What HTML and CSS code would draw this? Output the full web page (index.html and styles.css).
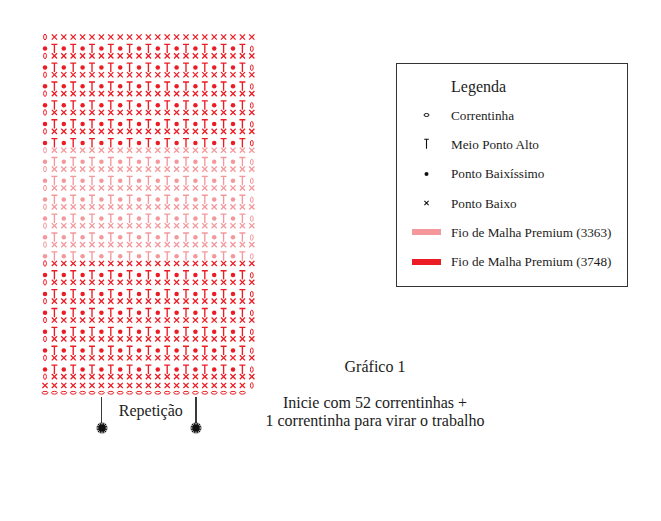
FILE: index.html
```
<!DOCTYPE html>
<html lang="pt">
<head>
<meta charset="utf-8">
<title>Gráfico 1</title>
<link rel="stylesheet" href="styles.css">
</head>
<body>
<main class="figure">
  <section class="chart-col">
    <svg class="chart" width="220" height="367" viewBox="0 0 220 367" aria-label="Gráfico de pontos">
      <defs>
        <path id="sc" d="M-2.6 -2.6 L2.6 2.6 M2.6 -2.6 L-2.6 2.6" fill="none" stroke="currentColor" stroke-width="1.3"/>
        <circle id="sl" cx="0" cy="0" r="2.25" fill="currentColor"/>
        <path id="hdc" d="M-3 0 H3 M0 0 V8.8" fill="none" stroke="currentColor" stroke-width="1.35"/>
        <ellipse id="ch-v" cx="0" cy="0" rx="1.4" ry="2.8" fill="none" stroke="currentColor" stroke-width="1"/>
        <ellipse id="ch-h" cx="0" cy="0" rx="2.9" ry="1.4" fill="none" stroke="currentColor" stroke-width="1"/>
      </defs>
      <g class="rows-red"></g>
      <g class="rows-pink"></g>
    </svg>
    <div class="repeat">
      <div class="marker">
        <span class="marker-line"></span>
        <svg class="marker-star" viewBox="-6 -6 12 12">
          <circle cx="0" cy="0" r="3.3" fill="#111"/>
          <path d="M0 -5.6 V5.6 M-5.6 0 H5.6 M-4 -4 L4 4 M4 -4 L-4 4 M-2.1 -5.2 L2.1 5.2 M2.1 -5.2 L-2.1 5.2 M-5.2 -2.1 L5.2 2.1 M5.2 -2.1 L-5.2 2.1" stroke="#111" stroke-width="1.1"/>
        </svg>
      </div>
      <span class="repeat-label">Repetição</span>
      <div class="marker">
        <span class="marker-line"></span>
        <svg class="marker-star" viewBox="-6 -6 12 12">
          <circle cx="0" cy="0" r="3.3" fill="#111"/>
          <path d="M0 -5.6 V5.6 M-5.6 0 H5.6 M-4 -4 L4 4 M4 -4 L-4 4 M-2.1 -5.2 L2.1 5.2 M2.1 -5.2 L-2.1 5.2 M-5.2 -2.1 L5.2 2.1 M5.2 -2.1 L-5.2 2.1" stroke="#111" stroke-width="1.1"/>
        </svg>
      </div>
    </div>
  </section>

  <section class="side">
    <div class="legend">
      <h2 class="legend-title">Legenda</h2>
      <ul class="legend-list">
        <li class="legend-item">
          <svg class="legend-sym" viewBox="-14.5 -6 29 12"><ellipse cx="0" cy="0" rx="2.5" ry="1.5" fill="none" stroke="#111" stroke-width="1"/></svg>
          <span>Correntinha</span>
        </li>
        <li class="legend-item">
          <svg class="legend-sym" viewBox="-14.5 -6 29 12"><path d="M-2.3 -4.8 H2.3 M0 -4.8 V4.8" fill="none" stroke="#111" stroke-width="1.1"/></svg>
          <span>Meio Ponto Alto</span>
        </li>
        <li class="legend-item">
          <svg class="legend-sym" viewBox="-14.5 -6 29 12"><circle cx="0" cy="0" r="2" fill="#111"/></svg>
          <span>Ponto Baixíssimo</span>
        </li>
        <li class="legend-item">
          <svg class="legend-sym" viewBox="-14.5 -6 29 12"><path d="M-2.1 -2.1 L2.1 2.1 M2.1 -2.1 L-2.1 2.1" fill="none" stroke="#111" stroke-width="1.1"/></svg>
          <span>Ponto Baixo</span>
        </li>
        <li class="legend-item">
          <span class="swatch swatch-pink"></span>
          <span>Fio de Malha Premium (3363)</span>
        </li>
        <li class="legend-item">
          <span class="swatch swatch-red"></span>
          <span>Fio de Malha Premium (3748)</span>
        </li>
      </ul>
    </div>
    <div class="captions">
      <p class="caption-title">Gráfico 1</p>
      <p class="caption-text">Inicie com 52 correntinhas +<br>1 correntinha para virar o trabalho</p>
    </div>
  </section>
</main>
<script src="script.js"></script>
</body>
</html>
```

FILE: styles.css
```
html, body {
  margin: 0;
  padding: 0;
  background: #ffffff;
}

body {
  font-family: "Liberation Serif", "Times New Roman", serif;
  color: #1c1c1c;
}

.figure {
  display: flex;
  align-items: flex-start;
  padding-top: 30px;
}

.chart-col {
  margin-left: 40px;
  width: 220px;
  display: flex;
  flex-direction: column;
}

.chart {
  display: block;
}

.rows-red {
  color: #ec1c24;
}

.rows-pink {
  color: #f4989c;
}

.repeat {
  display: flex;
  align-items: flex-start;
  padding-left: 55.5px;
}

.marker {
  width: 12px;
  display: flex;
  flex-direction: column;
  align-items: center;
}

.marker-line {
  display: block;
  width: 1.3px;
  height: 26px;
  background: #3a3a3a;
}

.marker-star {
  display: block;
  width: 12px;
  height: 12px;
  margin-top: -1px;
}

.repeat-label {
  width: 82.5px;
  box-sizing: border-box;
  padding-left: 4px;
  margin-top: 5px;
  text-align: center;
  font-size: 16px;
  line-height: 18px;
}

.side {
  width: 401px;
  margin-top: 33px;
  display: flex;
  flex-direction: column;
}

.legend {
  margin-left: 136px;
  width: 232px;
  height: 224px;
  box-sizing: border-box;
  border: 1px solid #333333;
  padding: 9px 0 0 15px;
}

.legend-title {
  margin: 0;
  padding-left: 39px;
  height: 27.5px;
  line-height: 27.5px;
  font-size: 16px;
  font-weight: normal;
}

.legend-list {
  list-style: none;
  margin: 0;
  padding: 0;
}

.legend-item {
  display: grid;
  grid-template-columns: 29px 1fr;
  column-gap: 10px;
  align-items: center;
  height: 29.3px;
  font-size: 13.2px;
  line-height: 15px;
}

.legend-sym {
  display: block;
  width: 29px;
  height: 12px;
}

.swatch {
  display: block;
  width: 29px;
  height: 6px;
}

.swatch-pink {
  background: #f4989c;
}

.swatch-red {
  background: #ec1c24;
}

.captions {
  width: 230px;
  margin-top: 70.7px;
  text-align: center;
  font-size: 16px;
  line-height: 18px;
}

.caption-title,
.caption-text {
  margin: 0;
}

.caption-text {
  margin-top: 18px;
}
```

FILE: script.js
```
(function () {
  var NS = 'http://www.w3.org/2000/svg';
  var svg = document.querySelector('.chart');
  var red = svg.querySelector('.rows-red');
  var pink = svg.querySelector('.rows-pink');
  var X0 = 5, DX = 9.4, Y0 = 7, DY = 18.87;

  function put(g, id, k, y) {
    var u = document.createElementNS(NS, 'use');
    u.setAttribute('href', '#' + id);
    u.setAttribute('x', (X0 + DX * k).toFixed(2));
    u.setAttribute('y', y.toFixed(2));
    g.appendChild(u);
  }

  for (var n = 0; n <= 18; n++) {
    var g = (n >= 6 && n <= 11) ? pink : red;
    var y = Y0 + DY * n;
    put(g, 'ch-v', 0, y);
    for (var k = 1; k <= 22; k++) put(g, 'sc', k, y);
    if (n < 18) {
      for (var j = 0; j <= 21; j++) {
        if (j % 2 === 0) put(g, 'sl', j, y + 11.6);
        else put(g, 'hdc', j, y + 7.3);
      }
      put(g, 'ch-v', 22, y + 11.8);
    }
  }

  var yb = Y0 + DY * 18 + 8.8;
  for (var a = 0; a <= 21; a++) put(red, 'sc', a, yb);
  put(red, 'ch-v', 22, yb);
  for (var b = 0; b <= 21; b++) put(red, 'ch-h', b, yb + 7.3);
})();
```
